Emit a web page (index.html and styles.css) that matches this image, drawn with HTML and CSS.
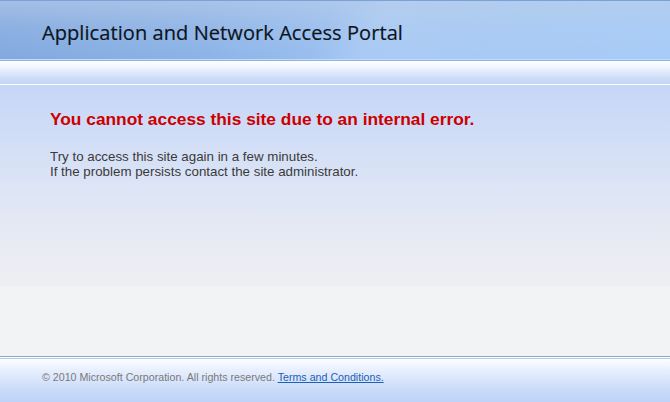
FILE: index.html
```html
<!DOCTYPE html>
<html lang="en">
<head>
<meta charset="utf-8">
<title>Application and Network Access Portal</title>
<link rel="stylesheet" href="styles.css">
</head>
<body>
<div class="page">
  <header class="header">
    <h1 class="title">Application and Network Access Portal</h1>
  </header>
  <div class="rule"></div>
  <div class="band"></div>
  <main class="main">
    <h2 class="error">You cannot access this site due to an internal error.</h2>
    <p class="msg">Try to access this site again in a few minutes.<br>If the problem persists contact the site administrator.</p>
  </main>
  <footer class="footer">
    <p class="copy">&copy; 2010 Microsoft Corporation. All rights reserved. <a class="terms" href="#">Terms and Conditions.</a></p>
  </footer>
</div>
</body>
</html>
```

FILE: styles.css
```css
html, body {
  margin: 0;
  padding: 0;
}
body {
  width: 670px;
  height: 402px;
  overflow: hidden;
  font-family: "Liberation Sans", Arial, sans-serif;
}
.page {
  display: flex;
  flex-direction: column;
  height: 402px;
}
.header {
  height: 58px;
  border-top: 1px solid #7aa1d9;
  display: flex;
  align-items: center;
  padding-left: 42px;
  background:
    linear-gradient(to bottom, rgba(185,205,232,0.6) 0%, rgba(185,205,232,0.2) 45%, rgba(255,255,255,0) 100%),
    linear-gradient(115deg, rgba(255,255,255,0) 48%, rgba(255,255,255,0.12) 55%, rgba(255,255,255,0.06) 72%, rgba(255,255,255,0) 100%),
    linear-gradient(to right, #82a9df 0%, #8cb3e7 30%, #a0c5f4 58%, #a7ccf8 100%);
}
.title {
  margin: 0;
  font-family: "Open Sans", "Noto Sans", sans-serif;
  font-weight: 400;
  font-size: 20px;
  letter-spacing: 0.08px;
  color: #0c1420;
  position: relative;
  top: 2px;
  -webkit-text-stroke: 0.2px #0c1420;
}
.rule {
  height: 1px;
  background: #c3d9f5;
  border-bottom: 1px solid #8cb4ea;
}
.band {
  height: 23px;
  background: linear-gradient(to bottom, #ffffff 0%, #f2f6fe 25%, #d0def8 70%, #c4d4f6 100%);
  border-bottom: 1px solid #ffffff;
}
.main {
  flex: 1;
  padding: 24px 50px 0;
  background:
    linear-gradient(to bottom, #c6d6f7 0px, #dbe4f6 95px, #e8ebf3 160px, #eeeff2 201px, #f2f3f5 202px, #f2f3f5 100%);
  border-bottom: 1px solid #8fa8c8;
}
.error {
  margin: 0;
  font-size: 17.33px;
  font-weight: bold;
  color: #cc0000;
  line-height: 20px;
}
.msg {
  margin: 20px 0 0;
  font-size: 13.33px;
  line-height: 15px;
  color: #3a3a3a;
}
.footer {
  height: 43px;
  border-top: 1px solid #ffffff;
  box-shadow: inset 0 1px 0 #b2c9ec;
  padding-top: 1px;
  background: linear-gradient(to bottom, #ffffff 0%, #e6eefd 30%, #c8daf9 75%, #bfd3f8 100%);
  padding-left: 42px;
  box-sizing: content-box;
}
.copy {
  margin: 12px 0 0;
  font-size: 10.67px;
  color: #7a7a7a;
}
.terms {
  color: #1c5fb8;
  text-decoration: underline;
}
```
